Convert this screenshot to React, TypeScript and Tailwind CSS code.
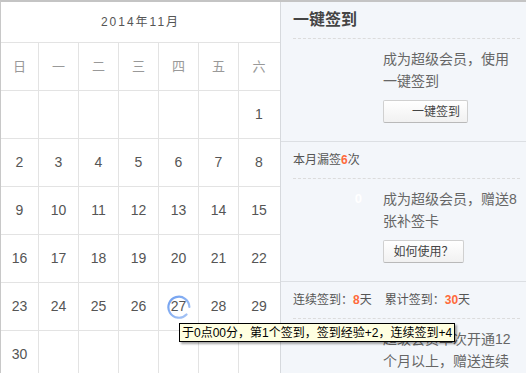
import React from "react";

const weekdays = ["日", "一", "二", "三", "四", "五", "六"];

const weeks: (number | null)[][] = [
  [null, null, null, null, null, null, 1],
  [2, 3, 4, 5, 6, 7, 8],
  [9, 10, 11, 12, 13, 14, 15],
  [16, 17, 18, 19, 20, 21, 22],
  [23, 24, 25, 26, 27, 28, 29],
  [30, null, null, null, null, null, null],
];

function cellClass(i: number) {
  // first column is narrower, last one has no right line (panel border takes it)
  if (i === 0) return "w-[38px] border-r border-[#e3e3e3]";
  if (i === 6) return "w-[40px]";
  return "w-[40px] border-r border-[#e3e3e3]";
}

function Today() {
  return (
    <svg className="absolute left-[7px] top-[12px]" width="26" height="26" viewBox="0 0 26 26">
      <defs>
        <linearGradient id="ring" x1="0" y1="0" x2="1" y2="1">
          <stop offset="0" stopColor="#6f9ff0" />
          <stop offset="1" stopColor="#a9c6f5" />
        </linearGradient>
      </defs>
      <path
        d="M20.5 19.5 A10.5 10.5 0 1 1 23.4 12"
        fill="none"
        stroke="url(#ring)"
        strokeWidth="2.2"
        strokeLinecap="round"
      />
    </svg>
  );
}

function Calendar() {
  return (
    <div className="w-[279px] shrink-0 bg-white">
      <div className="h-[41px] border-b border-[#e3e3e3] flex items-center justify-center text-[12px] tracking-[2px] text-[#555]">
        2014年11月
      </div>
      <div className="flex h-[48px] border-b border-[#e3e3e3]">
        {weekdays.map((w, i) => (
          <div key={w} className={`${cellClass(i)} flex items-center justify-center text-[13px] text-[#999]`}>
            {w}
          </div>
        ))}
      </div>
      {weeks.map((row, r) => (
        <div key={r} className="flex h-[48px] border-b border-[#e3e3e3]">
          {row.map((d, i) => (
            <div key={i} className={`${cellClass(i)} relative flex items-center justify-center text-[14px] text-[#555]`}>
              {d === 27 && <Today />}
              <span className="relative">{d ?? ""}</span>
            </div>
          ))}
        </div>
      ))}
    </div>
  );
}

function Btn({ children, wide }: { children: React.ReactNode; wide?: boolean }) {
  return (
    <button
      className={`h-[23px] ${wide ? "w-[85px] pl-[21px]" : "w-[81px]"} rounded-[2px] border border-[#d0d0d0] border-b-[#b9b9b9] bg-gradient-to-b from-white to-[#f1f1f1] text-[12px] text-[#444] flex items-center justify-center`}
    >
      {children}
    </button>
  );
}

function Section({
  head,
  mark,
  lines,
  button,
  last,
}: {
  head: React.ReactNode;
  mark?: boolean;
  lines: React.ReactNode;
  button?: React.ReactNode;
  last?: boolean;
}) {
  return (
    <div className={`pl-[12px] pr-[6px] ${last ? "" : "h-[140px] border-b border-[#dcdfe3]"}`}>
      <div className="h-[37px] border-b border-dashed border-[#dcdcdc] flex items-center">{head}</div>
      <div className="flex pt-[9px]">
        <div className="w-[90px] pr-[21px] text-right text-[13px] font-bold leading-[22px] text-white">
          {mark ? "0" : ""}
        </div>
        <div>
          <p className="w-[134px] text-[14px] leading-[22px] text-[#666]">{lines}</p>
          {button && <div className="mt-[8px]">{button}</div>}
        </div>
      </div>
    </div>
  );
}

export default function App() {
  return (
    <div className="relative w-[526px] h-[373px] overflow-hidden border-t-2 border-l border-t-[#c4c4c4] border-l-[#c8c8c8] font-['Liberation_Sans','Noto_Sans_CJK_SC',sans-serif]">
      <div className="flex">
        <Calendar />
        <div className="flex-1 border-l border-[#d6d9dd] bg-[#f3f6fa] min-h-[371px]">
          <Section
            head={<span className="text-[16px] font-bold text-[#444]">一键签到</span>}
            lines="成为超级会员，使用一键签到"
            button={<Btn wide>一键签到</Btn>}
          />
          <Section
            head={
              <span className="text-[12px] text-[#555]">
                本月漏签<b className="text-[#ff6a3a]">6</b>次
              </span>
            }
            mark
            lines="成为超级会员，赠送8张补签卡"
            button={<Btn>如何使用？</Btn>}
          />
          <Section
            last
            head={
              <span className="text-[12px] text-[#555]">
                连续签到：<b className="text-[#ff6a3a]">8</b>天
                <span className="ml-[13px]">
                  累计签到：<b className="text-[#ff6a3a]">30</b>天
                </span>
              </span>
            }
            mark
            lines="超级会员单次开通12个月以上，赠送连续"
          />
        </div>
      </div>

      {/* browser title tooltip over the 27th */}
      <div className="absolute left-[178px] top-[321px] whitespace-nowrap border border-black bg-[#ffffe1] px-[2px] h-[19px] flex items-center text-[12px] text-black shadow-[2px_2px_2px_rgba(0,0,0,0.35)]">
        于0点00分，第1个签到，签到经验+2，连续签到+4
      </div>
    </div>
  );
}
